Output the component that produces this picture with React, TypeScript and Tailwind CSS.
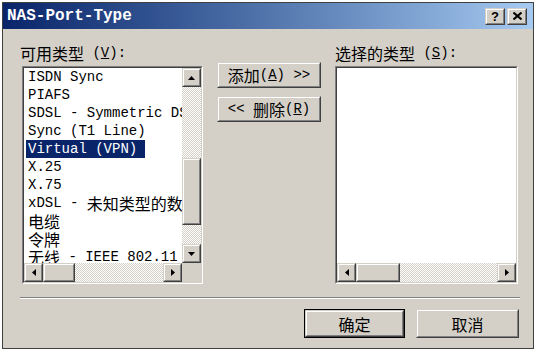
import React from "react";

const MONO = "font-['Liberation_Mono','Noto_Sans_CJK_SC',monospace]";

function Raised({ className = "", children }: { className?: string; children?: React.ReactNode }) {
  return (
    <div className={`border border-t-[#d4d0c8] border-l-[#d4d0c8] border-r-[#404040] border-b-[#404040] bg-[#d4d0c8] ${className}`}>
      <div className="w-full h-full border border-t-white border-l-white border-r-[#808080] border-b-[#808080] flex items-center justify-center">
        {children}
      </div>
    </div>
  );
}

function Tri({ dir }: { dir: "up" | "down" | "left" | "right" }) {
  if (dir === "up")
    return (
      <svg width="7" height="4" viewBox="0 0 7 4"><polygon points="3.5,0 7,4 0,4" fill="#000" /></svg>
    );
  if (dir === "down")
    return (
      <svg width="7" height="4" viewBox="0 0 7 4"><polygon points="0,0 7,0 3.5,4" fill="#000" /></svg>
    );
  if (dir === "left")
    return (
      <svg width="4" height="7" viewBox="0 0 4 7"><polygon points="4,0 4,7 0,3.5" fill="#000" /></svg>
    );
  return (
    <svg width="4" height="7" viewBox="0 0 4 7"><polygon points="0,0 4,3.5 0,7" fill="#000" /></svg>
  );
}

const TRACK = "bg-[image:repeating-conic-gradient(#d4d0c8_0%_25%,#ffffff_0%_50%)] bg-[length:2px_2px]";

function Sunken({ className = "", children }: { className?: string; children?: React.ReactNode }) {
  return (
    <div className={`border border-t-[#808080] border-l-[#808080] border-r-white border-b-white ${className}`}>
      <div className="w-full h-full border border-t-[#404040] border-l-[#404040] border-r-[#d4d0c8] border-b-[#d4d0c8] bg-white flex flex-col">
        {children}
      </div>
    </div>
  );
}

const Cjk = ({ children }: { children: React.ReactNode }) => (
  <span className="inline-block align-top h-[18px] leading-[18px] text-[16px] font-['Noto_Sans_CJK_SC',sans-serif]">{children}</span>
);

const items: { node: React.ReactNode; sel?: boolean }[] = [
  { node: "ISDN Sync" },
  { node: "PIAFS" },
  { node: "SDSL - Symmetric DSL" },
  { node: "Sync (T1 Line)" },
  { node: "Virtual (VPN)", sel: true },
  { node: "X.25" },
  { node: "X.75" },
  { node: <>xDSL - <Cjk>未知类型的数字用户线</Cjk></> },
  { node: <Cjk>电缆</Cjk> },
  { node: <Cjk>令牌</Cjk> },
  { node: <><Cjk>无线</Cjk> - IEEE 802.11</> },
];

export default function App() {
  return (
    <div className={`w-[536px] h-[352px] bg-white p-[2px] ${MONO}`}>
      <div className="w-[532px] h-[347px] border border-[#404040] bg-[#d4d0c8] flex flex-col">
        {/* Title bar */}
        <div className="h-[26px] bg-linear-to-r from-[#0a246a] to-[#a6caf0] flex items-center pl-[4px] pr-[6px] shrink-0">
          <span className="text-white font-bold text-[16px] leading-none font-['Liberation_Mono',monospace]">NAS-Port-Type</span>
          <div className="ml-auto flex gap-[2px]">
            <Raised className="w-[20px] h-[17px]">
              <span className="text-[13px] font-bold leading-none font-['Liberation_Sans',sans-serif] text-black">?</span>
            </Raised>
            <Raised className="w-[20px] h-[17px]">
              <svg width="9" height="8" viewBox="0 0 9 8">
                <path d="M0.5 0.5 L8.5 7.5 M8.5 0.5 L0.5 7.5" stroke="#000" strokeWidth="2" />
              </svg>
            </Raised>
          </div>
        </div>

        {/* Body */}
        <div className="flex-1 flex flex-col pl-[17px] pr-[14px] pt-[15px] text-black">
          <div className="flex">
            {/* Left column */}
            <div className="flex flex-col w-[183px]">
              <div className="h-[18px] leading-[18px] text-[14px] whitespace-nowrap">
                <Cjk>可用类型</Cjk> (<span className="underline">V</span>):
              </div>
              <Sunken className="mt-[4px] ml-[2px] w-[181px] h-[218px]">
                <div className="flex h-[195px]">
                  <div className="w-[158px] overflow-hidden pl-[2px] text-[14px]">
                    {items.map((it, i) => (
                      <div key={i} className="h-[18px] leading-[18px] whitespace-nowrap overflow-hidden">
                        {it.sel ? (
                          <span className="bg-[#0a246a] text-white pl-[2px] pr-[8px] inline-block h-[18px]">{it.node}</span>
                        ) : (
                          <span className="px-[2px]">{it.node}</span>
                        )}
                      </div>
                    ))}
                  </div>
                  <div className={`w-[19px] h-[195px] flex flex-col ${TRACK}`}>
                    <Raised className="w-[19px] h-[19px] shrink-0"><Tri dir="up" /></Raised>
                    <div className="h-[71px]" />
                    <Raised className="w-[19px] h-[67px] shrink-0" />
                    <div className="flex-1" />
                    <Raised className="w-[19px] h-[19px] shrink-0"><Tri dir="down" /></Raised>
                  </div>
                </div>
                <div className="flex h-[19px]">
                  <div className={`flex h-[19px] w-[158px] ${TRACK}`}>
                    <Raised className="w-[19px] h-[19px] shrink-0"><Tri dir="left" /></Raised>
                    <Raised className="w-[32px] h-[19px] shrink-0" />
                    <div className="flex-1" />
                    <Raised className="w-[19px] h-[19px] shrink-0"><Tri dir="right" /></Raised>
                  </div>
                  <div className="w-[19px] h-[19px] bg-[#d4d0c8]" />
                </div>
              </Sunken>
            </div>

            {/* Middle buttons */}
            <div className="ml-[14px] mt-[18px] flex flex-col gap-[8px] w-[104px]">
              <Raised className="w-[104px] h-[26px]">
                <span className="text-[14px] whitespace-pre h-[18px] leading-[18px]">
                  <Cjk>添加</Cjk>(<span className="underline">A</span>) &gt;&gt;
                </span>
              </Raised>
              <Raised className="w-[104px] h-[26px]">
                <span className="text-[14px] whitespace-pre h-[18px] leading-[18px]">
                  &lt;&lt; <Cjk>删除</Cjk>(<span className="underline">R</span>)
                </span>
              </Raised>
            </div>

            {/* Right column */}
            <div className="ml-[14px] flex flex-col">
              <div className="h-[18px] leading-[18px] text-[14px] whitespace-nowrap">
                <Cjk>选择的类型</Cjk> (<span className="underline">S</span>):
              </div>
              <Sunken className="mt-[4px] w-[183px] h-[218px]">
                <div className="h-[195px]" />
                <div className={`flex h-[19px] w-[179px] ${TRACK}`}>
                  <Raised className="w-[19px] h-[19px] shrink-0"><Tri dir="left" /></Raised>
                  <Raised className="w-[44px] h-[19px] shrink-0" />
                  <div className="flex-1" />
                  <Raised className="w-[19px] h-[19px] shrink-0"><Tri dir="right" /></Raised>
                </div>
              </Sunken>
            </div>
          </div>

          {/* Separator */}
          <div className="mt-[13px] w-[500px] h-[2px] border-t border-t-[#808080] border-b border-b-white" />

          {/* Bottom buttons */}
          <div className="mt-[10px] flex justify-end gap-[11px]">
            <div className="border border-black">
              <Raised className="w-[99px] h-[27px]">
                <Cjk>确定</Cjk>
              </Raised>
            </div>
            <Raised className="w-[103px] h-[29px]">
              <Cjk>取消</Cjk>
            </Raised>
          </div>
        </div>
      </div>
    </div>
  );
}
